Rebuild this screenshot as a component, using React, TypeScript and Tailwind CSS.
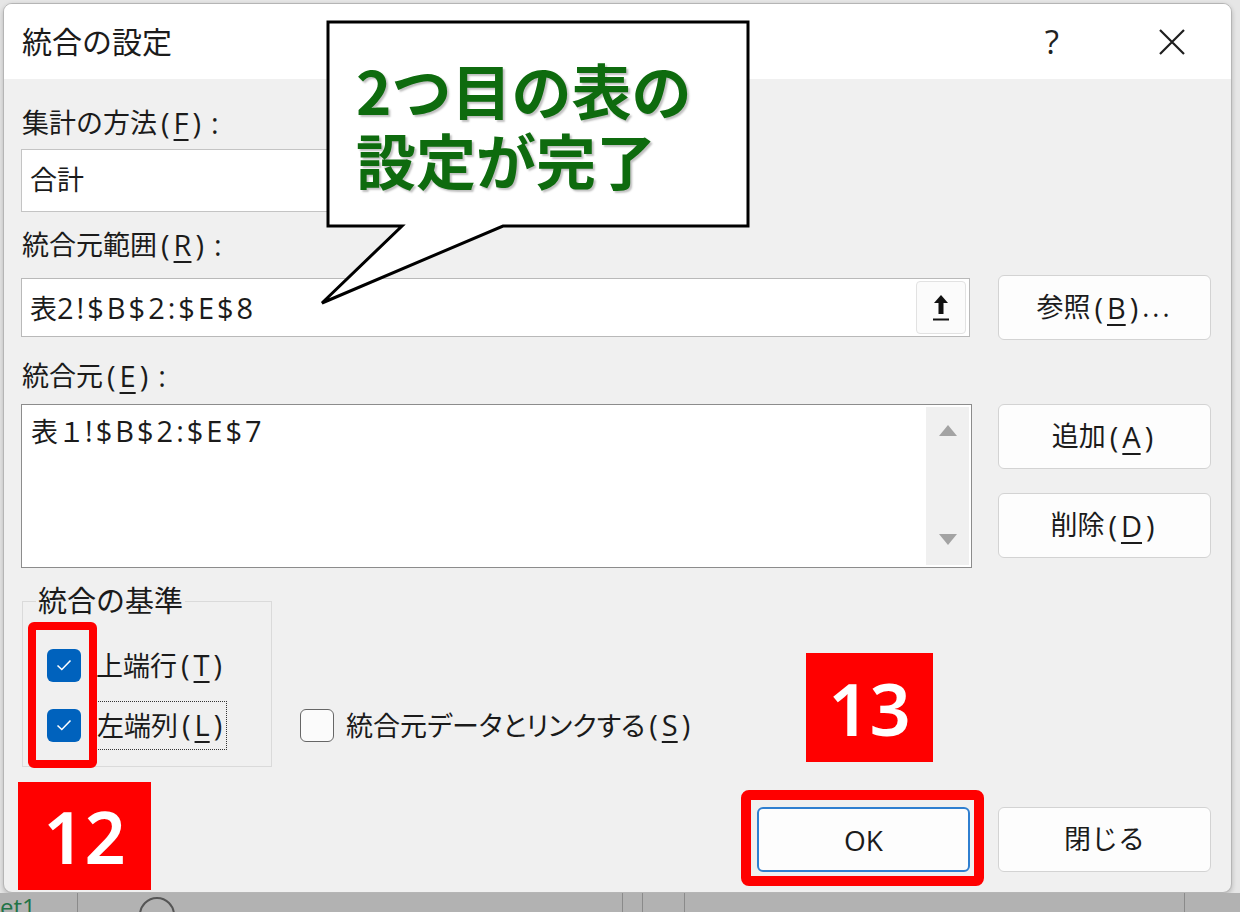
import React from "react";

function Mn({ children }: { children: React.ReactNode }) {
  return <span className="underline decoration-[1.5px] underline-offset-[5px]">{children}</span>;
}

// mnemonic key in parentheses, spaced like the Windows UI font
function Key({ k }: { k: string }) {
  return (
    <span className="text-[29px]">
      <span className="px-[4px]">(</span>
      <Mn>{k}</Mn>
      <span className="px-[4px]">)</span>
    </span>
  );
}

function WinButton({ children, primary }: { children: React.ReactNode; primary?: boolean }) {
  return (
    <button
      type="button"
      className={
        primary
          ? "flex h-[65px] w-[213px] items-center justify-center rounded-[6px] border-2 border-[#2f7fd0] bg-[#fdfdfd] text-[27px] text-[#1b1b1b]"
          : "flex h-[65px] w-[213px] items-center justify-center rounded-[6px] border border-[#d3d3d3] bg-[#fdfdfd] text-[27px] text-[#1b1b1b]"
      }
    >
      {children}
    </button>
  );
}

function Check({ on }: { on: boolean }) {
  if (on) {
    return (
      <span className="flex h-[33px] w-[34px] shrink-0 items-center justify-center rounded-[6px] bg-[#0062bd]">
        <svg width="18" height="14" viewBox="0 0 18 14">
          <path d="M2.5 7.5 L6.8 11.5 L15.5 2.5" fill="none" stroke="white" strokeWidth="1.5" />
        </svg>
      </span>
    );
  }
  return <span className="h-[33px] w-[34px] shrink-0 rounded-[6px] border-[1.5px] border-[#666] bg-[#fbfbfb]" />;
}

export default function App() {
  return (
    <div className="relative h-[912px] w-[1240px] overflow-hidden bg-[#e6e6e6] font-['Open_Sans','Noto_Sans_CJK_JP',sans-serif] text-[#1b1b1b]">
      <div className="pl-[3px] pt-[3px]">
        <div className="flex h-[890px] w-[1229px] flex-col overflow-hidden rounded-[9px] border border-[#b5b5b5] bg-[#f0f0f0] shadow-[0_2px_5px_rgba(0,0,0,0.22)]">
          {/* title bar */}
          <div className="flex h-[75px] shrink-0 items-center bg-white pl-[18px] pr-[44px]">
            <span className="text-[30px] leading-none">統合の設定</span>
            <span className="ml-auto text-[33px] leading-none text-[#222]">?</span>
            <svg className="ml-[98px]" width="30" height="30" viewBox="0 0 30 30">
              <path d="M3 3 L27 27 M27 3 L3 27" stroke="#1e1e1e" strokeWidth="2.2" />
            </svg>
          </div>

          {/* body */}
          <div className="flex flex-1 flex-col pl-[17px] pr-[20px] pt-[26px] text-[27px]">
            <div className="flex h-9 items-center pl-[1px]">
              集計の方法<Key k="F" />
              <span className="ml-[6px] text-[29px]">:</span>
            </div>
            <div className="mt-[8px] flex h-[63px] w-[480px] items-center border border-[#c4c4c4] bg-white pl-[8px]">
              合計
            </div>

            <div className="mt-[15px] flex h-9 items-center pl-[1px]">
              統合元範囲<Key k="R" />
              <span className="ml-[6px] text-[29px]">:</span>
            </div>
            <div className="mt-[12px] flex h-[65px] items-center justify-between">
              <div className="flex h-[59px] w-[949px] items-center border border-[#b9b9b9] bg-white pl-[8px] pr-[3px]">
                <span>
                  表<span className="text-[29px] tracking-[3px]">2!$B$2:$E$8</span>
                </span>
                <span className="ml-auto flex h-[53px] w-[50px] items-center justify-center rounded-[4px] border border-[#e2e2e2] bg-[#fbfbfb]">
                  <svg width="22" height="32" viewBox="0 0 22 32">
                    <path d="M11 3 L4 11 L8.5 11 L8.5 22 L13.5 22 L13.5 11 L18 11 Z" fill="#111" />
                    <path d="M3 27.5 H19" stroke="#111" strokeWidth="2" />
                  </svg>
                </span>
              </div>
              <WinButton>
                参照<Key k="B" />
                <span className="tracking-[3px]">...</span>
              </WinButton>
            </div>

            <div className="mt-[18px] flex h-9 items-center pl-[1px]">
              統合元<Key k="E" />
              <span className="ml-[6px] text-[29px]">:</span>
            </div>
            <div className="mt-[10px] flex justify-between">
              <div className="flex h-[164px] w-[951px] border border-[#8c8c8c] bg-white p-[2px]">
                <div className="flex-1 pl-[7px] pt-[6px] leading-[36px]">
                  表１<span className="text-[29px] tracking-[3px]">!$B$2:$E$7</span>
                </div>
                <div className="flex w-[43px] flex-col items-center justify-between bg-[#f0f0f0] pb-[19px] pt-[17px]">
                  <svg width="20" height="13" viewBox="0 0 20 13">
                    <path d="M10 1 L19 12 L1 12 Z" fill="#a3a3a3" />
                  </svg>
                  <svg width="20" height="13" viewBox="0 0 20 13">
                    <path d="M1 1 L19 1 L10 12 Z" fill="#a3a3a3" />
                  </svg>
                </div>
              </div>
              <div className="flex flex-col gap-[24px]">
                <WinButton>
                  追加<Key k="A" />
                </WinButton>
                <WinButton>
                  削除<Key k="D" />
                </WinButton>
              </div>
            </div>

            <div className="mt-[15px] flex items-start">
              <fieldset className="ml-[1px] h-[184px] w-[250px] border border-[#dadada]">
                <legend className="ml-[13px] px-[2px] text-[29px] leading-[36px]">統合の基準</legend>
                <div className="pl-[24px]">
                  <div className="mt-[26px] flex h-[40px] items-center gap-[15px]">
                    <Check on />
                    <span>
                      上端行<Key k="T" />
                    </span>
                  </div>
                  <div className="mt-[20px] flex h-[40px] items-center gap-[15px]">
                    <Check on />
                    <span className="border border-dotted border-[#333] leading-[46px]">
                      左端列<Key k="L" />
                    </span>
                  </div>
                </div>
              </fieldset>
              <div className="ml-[28px] mt-[122px] flex h-[40px] items-center gap-[12px]">
                <Check on={false} />
                <span className="[font-feature-settings:'palt']">
                  統合元データとリンクする<Key k="S" />
                </span>
              </div>
            </div>

            <div className="mt-[40px] flex justify-end gap-[28px]">
              <WinButton primary>
                <span className="text-[28px]">OK</span>
              </WinButton>
              <WinButton>閉じる</WinButton>
            </div>
          </div>
        </div>
      </div>

      {/* sheet tab bar peeking under the dialog */}
      <div className="flex h-[19px] bg-[#b2b2b2] text-[24px] leading-none">
        <div className="w-[78px] overflow-hidden border-r border-[#8a8a8a] pt-[2px] text-[#217346]">et1</div>
        <div className="w-[545px] border-r border-[#8a8a8a] pl-[61px] pt-[4px]">
          <span className="block h-[36px] w-[36px] rounded-full border-2 border-[#555]" />
        </div>
        <div className="w-[20px] border-r border-[#8a8a8a]" />
        <div className="w-[42px] border-r border-[#8a8a8a]" />
        <div className="w-[500px] border-r border-[#8a8a8a]" />
      </div>

      {/* callout */}
      <svg className="absolute left-0 top-0" width="760" height="320" viewBox="0 0 760 320">
        <path
          d="M328 22 H748 V226 H503 L322 303 L402 226 H328 Z"
          fill="white"
          stroke="black"
          strokeWidth="3"
          strokeLinejoin="miter"
        />
      </svg>
      <div className="absolute left-[356px] top-[54px] font-['Noto_Sans_CJK_JP',sans-serif] text-[60px] font-bold leading-[70px] text-[#0e6b0e] [text-shadow:2px_2px_2px_rgba(0,0,0,0.25)]">
        <div>2つ目の表の</div>
        <div>設定が完了</div>
      </div>

      {/* step annotations */}
      <div className="absolute left-[28px] top-[622px] h-[146px] w-[69px] rounded-[6px] border-[8px] border-[#ff0000]" />
      <div className="absolute left-[741px] top-[790px] h-[96px] w-[243px] rounded-[8px] border-[10px] border-[#ff0000]" />
      <div className="absolute left-[18px] top-[782px] flex h-[108px] w-[133px] items-center justify-center bg-[#ff0000] font-['Noto_Sans',sans-serif] text-[72px] font-semibold leading-none text-white">
        12
      </div>
      <div className="absolute left-[806px] top-[653px] flex h-[109px] w-[127px] items-center justify-center bg-[#ff0000] font-['Noto_Sans',sans-serif] text-[72px] font-semibold leading-none text-white">
        13
      </div>
    </div>
  );
}
